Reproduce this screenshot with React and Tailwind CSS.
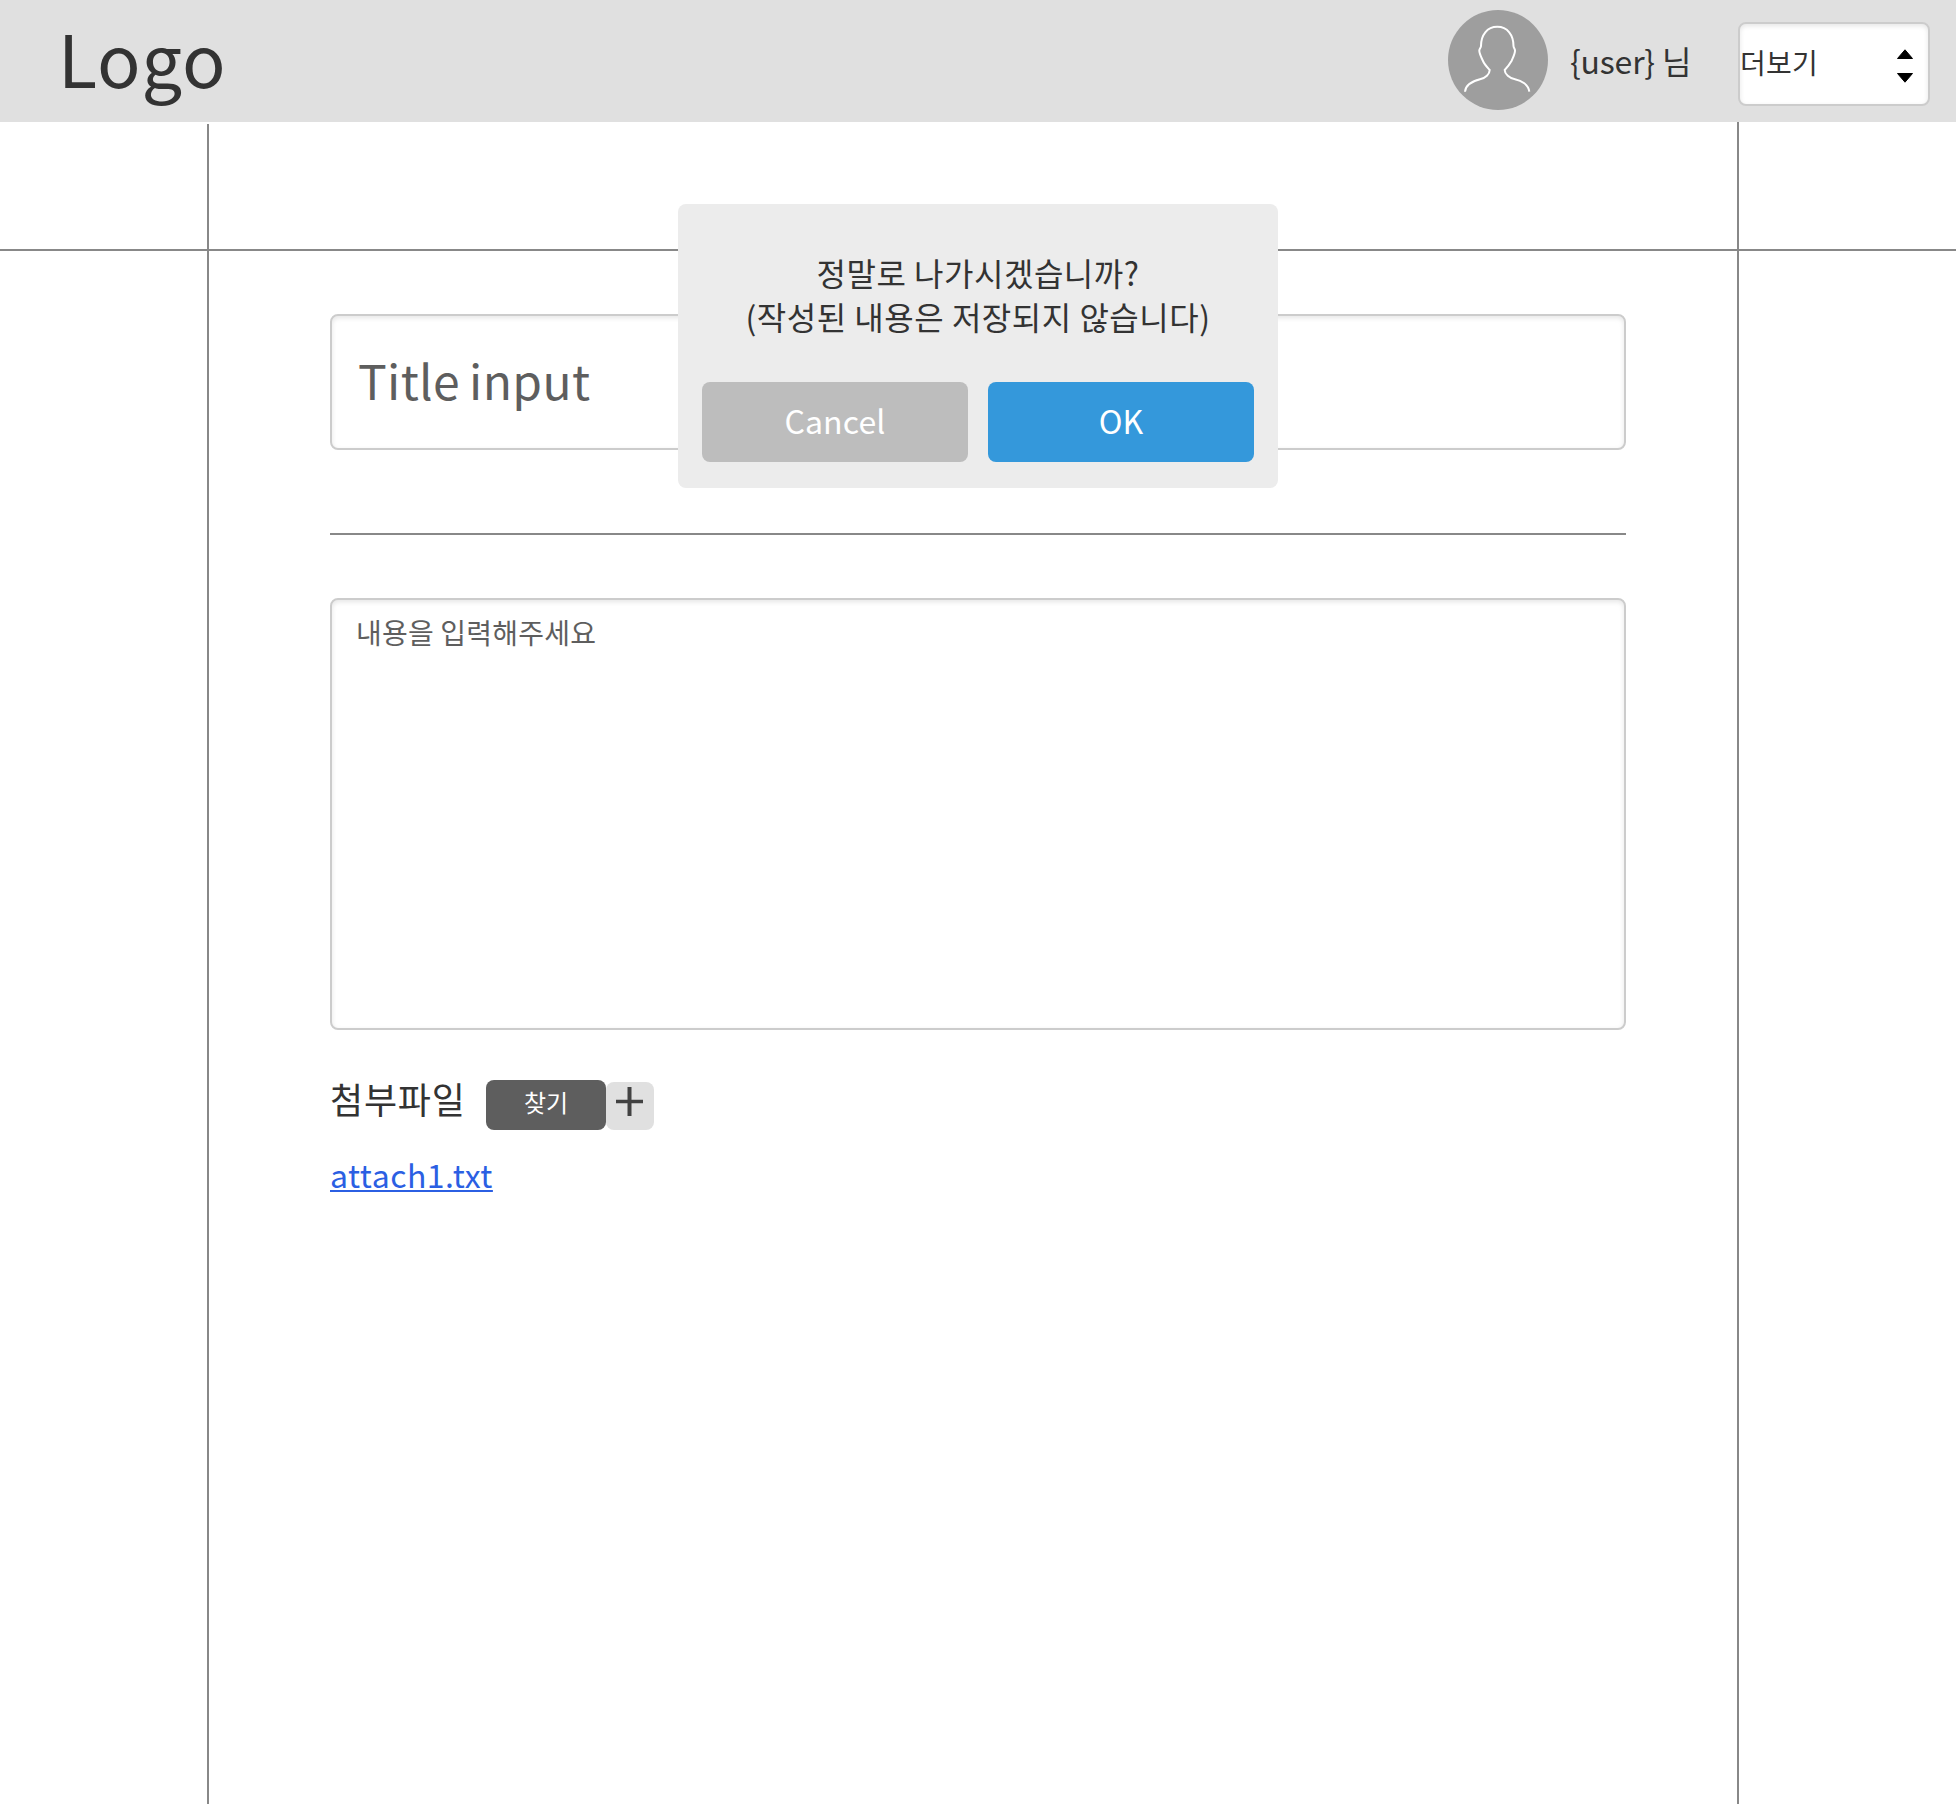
import React from "react";

const FIELD =
  "w-full rounded-lg border-2 border-[#cccccc] bg-white text-[#5e5e5e] shadow-[inset_0_2px_5px_rgba(0,0,0,0.1)] outline-none placeholder:text-[#5e5e5e] placeholder:opacity-100";

function Avatar() {
  return (
    <svg className="h-[100px] w-[100px]" viewBox="0 0 100 100" fill="none">
      <circle cx="50" cy="50" r="50" fill="#9e9e9e" />
      <path
        d="M17 81.700C17.500 74.500 25 71 32 69.200C37.500 68 41.700 64 41.700 60C38.500 56.500 36.500 54.500 35 51C33.500 47.500 31.300 44 31.300 40.500C31.300 38.500 33 38 33 36C33 25 39 16.800 49.300 16.800C59.500 16.800 65.500 25 65.500 36C65.500 38 67 38.500 67 40.500C67 44 65 47.500 63.500 51C61.500 54.500 60 56.500 56.700 60C56.700 64 61.500 68.500 67 69.200C73.500 70.500 80.500 74.500 81.300 81.700"
        stroke="#fff"
        strokeWidth="2"
      />
    </svg>
  );
}

function Header() {
  return (
    <header className="flex h-[122px] items-start bg-[#e0e0e0]">
      <div className="mt-[5px] ml-[58px] text-[72px] leading-[104px] tracking-[0.9px]">Logo</div>
      <div className="mt-[10px] ml-auto">
        <Avatar />
      </div>
      <div className="mt-[37px] ml-[22px] w-[168px] text-[32px] leading-[46px] tracking-[-0.2px] whitespace-nowrap">{"{user} 님"}</div>
      <div className="mt-[22px] mr-[26px] flex h-[84px] w-[192px] items-center justify-between rounded-lg border-2 border-[#cccccc] bg-white pr-[15px] text-[28px] shadow-[inset_0_2px_5px_rgba(0,0,0,0.1)]">
        <span className="mb-[4px] leading-[40px] tracking-[0.2px]">더보기</span>
        <svg className="mt-1 h-[34px] w-4" viewBox="0 0 16 34" fill="#000" stroke="#000" strokeLinejoin="round">
          <path d="M0.500 9.500L8 0.800L15.500 9.500Z" />
          <path d="M0.500 24.500H15.500L8 33.200Z" />
        </svg>
      </div>
    </header>
  );
}

function Dialog() {
  return (
    <div className="absolute top-[204px] left-[678px] flex h-[284px] w-[600px] flex-col rounded-lg bg-[#ececec] px-6 pt-[46px] pb-[26px]">
      <p className="text-center text-[32px] leading-[44px] tracking-[0.52px]">
        정말로 나가시겠습니까?
        <br />
        (작성된 내용은 저장되지 않습니다)
      </p>
      <div className="mt-auto flex gap-5">
        <button className="h-20 flex-1 rounded-lg bg-[#bdbdbd] pb-1 text-[32px] tracking-[0.15px] text-white">Cancel</button>
        <button className="h-20 flex-1 rounded-lg bg-[#3498db] pb-1 text-[32px] tracking-[0.15px] text-white">OK</button>
      </div>
    </div>
  );
}

export default function App() {
  return (
    <div className="relative flex h-[1804px] w-[1956px] flex-col overflow-hidden bg-white font-['Noto_Sans_CJK_KR',sans-serif] text-[#333333]">
      <Header />
      <div className="grid flex-1 grid-cols-[207px_2px_1528px_2px_1fr]">
        <div className="mt-[127px] h-[2px] bg-[#888888]" />
        <div className="mt-[2px] bg-[#888888]" />
        <main>
          <div className="mt-[127px] h-[2px] bg-[#888888]" />
          <div className="ml-[121px] w-[1296px] pt-[63px]">
            <input
              className={`${FIELD} block h-[136px] px-[26px] pb-[6px] text-[48px] tracking-[0.35px] [word-spacing:-2px]`}
              placeholder="Title input"
            />
            <div className="mt-[83px] h-[2px] bg-[#888888]" />
            <textarea
              className={`${FIELD} mt-[63px] block h-[432px] resize-none px-[24px] py-[12px] text-[28px] leading-[40px] tracking-[0.2px]`}
              placeholder="내용을 입력해주세요"
            />
            <div className="mt-[50px] flex h-[50px] items-start">
              <span className="-mt-[8px] w-[156px] text-[36px] leading-[52px] tracking-[0.8px]">첨부파일</span>
              <button className="h-[50px] w-[120px] rounded-lg bg-[#5e5e5e] pb-[6px] text-[24px] text-white">찾기</button>
              <button className="mt-[2px] flex h-12 w-12 justify-center rounded-lg bg-[#e0e0e0] pt-[5px] pr-[1px]">
                <svg className="h-[29px] w-[27px]" viewBox="0 0 27 29" fill="#424242">
                  <path d="M11.500 0h4v12.700H27v3.600H15.500V29h-4V16.300H0v-3.600h11.500z" />
                </svg>
              </button>
            </div>
            <a className="mt-[21px] block w-fit text-[32px] leading-[46px] tracking-[0.48px] text-[#2b5fe3] underline decoration-2 underline-offset-2">
              attach1.txt
            </a>
          </div>
        </main>
        <div className="bg-[#888888]" />
        <div className="mt-[127px] h-[2px] bg-[#888888]" />
      </div>
      <Dialog />
    </div>
  );
}
